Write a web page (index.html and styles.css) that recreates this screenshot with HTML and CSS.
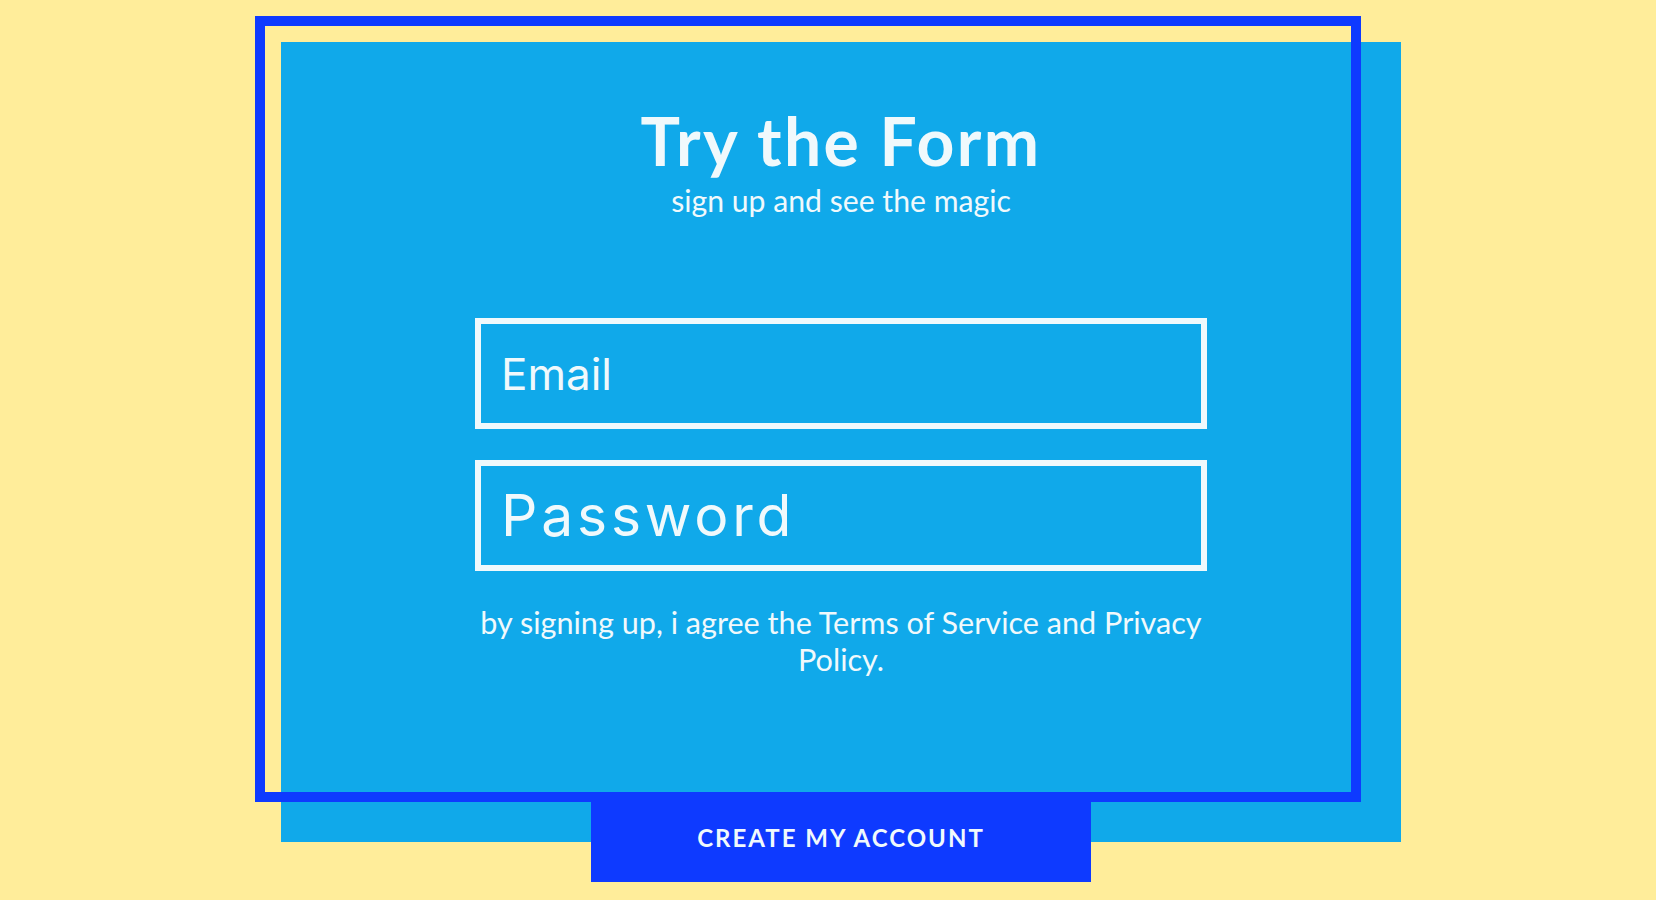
FILE: index.html
```html
<!DOCTYPE html>
<html lang="en">
<head>
<meta charset="utf-8">
<title>Try the Form</title>
<link rel="stylesheet" href="styles.css">
</head>
<body>
<main class="stage">
  <div class="wrap">
    <div class="frame"></div>
    <section class="card">
      <h1 class="title">Try the Form</h1>
      <p class="subtitle">sign up and see the magic</p>
      <form class="form">
        <input class="field field-email" type="email" placeholder="Email">
        <input class="field field-pass" type="password" placeholder="Password">
        <p class="terms">by signing up, i agree the Terms of Service and Privacy Policy.</p>
      </form>
    </section>
    <button class="cta" type="button">CREATE MY ACCOUNT</button>
  </div>
</main>
</body>
</html>
```

FILE: styles.css
```css
* { box-sizing: border-box; }
html, body { margin: 0; padding: 0; }
body {
  background: #ffed9a;
  font-family: Lato, "Open Sans", sans-serif;
  color: #f0f9fc;
}
.stage {
  display: flex;
  justify-content: center;
  padding-top: 16px;
}
.wrap {
  position: relative;
  width: 1146px;
  padding: 26px 0 0 26px;
  display: flex;
  flex-direction: column;
}
.frame {
  position: absolute;
  left: 0;
  top: 0;
  width: 1106px;
  height: 786px;
  border: 10px solid #0e3aff;
  z-index: 2;
  pointer-events: none;
}
.card {
  width: 1120px;
  height: 800px;
  background: #10a9ea;
  display: flex;
  flex-direction: column;
  align-items: center;
  padding-top: 66px;
}
.title {
  margin: 0;
  font-size: 66px;
  line-height: 66px;
  font-weight: 700;
  letter-spacing: 2.4px;
}
.subtitle {
  margin: 11px 0 0;
  font-size: 30.2px;
  line-height: 30px;
  font-weight: 400;
}
.form {
  width: 732px;
  margin-top: 103px;
  display: flex;
  flex-direction: column;
  gap: 31px;
}
.field {
  width: 732px;
  height: 111px;
  border: 6px solid #f0f9fc;
  background: transparent;
  padding: 0 20px;
  color: #f0f9fc;
  font-family: Inter, "Noto Sans", sans-serif;
  outline: none;
  border-radius: 0;
}
.field::placeholder { color: #f0f9fc; opacity: 1; }
.field-email { font-size: 44px; font-weight: 400; }
.field-pass { font-size: 57px; letter-spacing: 3.8px; font-weight: 400; }
.terms {
  margin: 2px 0 0;
  text-align: center;
  font-size: 30.6px;
  line-height: 37px;
  font-weight: 400;
}
.cta {
  position: relative;
  z-index: 3;
  align-self: center;
  margin: -50px 0 0 0;
  width: 500px;
  height: 90px;
  border: 0;
  background: #0e3aff;
  color: #f0f9fc;
  font-family: Lato, sans-serif;
  font-size: 24px;
  font-weight: 700;
  letter-spacing: 2px;
  cursor: pointer;
}
```
